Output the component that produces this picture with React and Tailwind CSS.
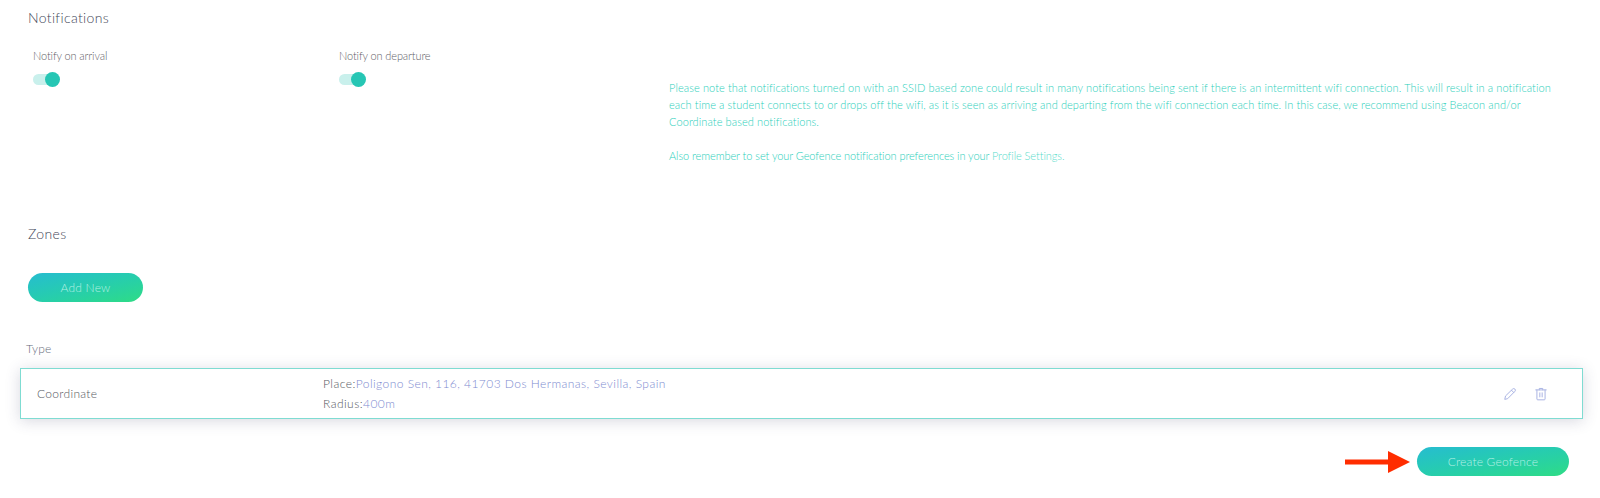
function Toggle() {
  return (
    <div className="relative h-[11px] w-[22px] rounded-full bg-[#c9f0ec]">
      <div className="absolute left-[12px] top-[-2px] h-[15px] w-[15px] rounded-full bg-[#26c6b4]" />
    </div>
  );
}

function GradientButton({ className, children }) {
  return (
    <button className={"flex h-[29px] items-center justify-center rounded-full bg-gradient-to-br from-[#27bcd0] to-[#2fdc84] text-[12px] font-light tracking-[0.2px] text-[#b5efe4] " + className}>
      {children}
    </button>
  );
}

export default function App() {
  return (
    <div className="h-[498px] w-[1600px] overflow-hidden bg-white font-['Lato',sans-serif] font-light text-[#5c6370]">
      <div className="flex h-[214px] flex-col pl-[28px] pt-[8px]">
        <h2 className="text-[14px] leading-[19px] tracking-[0.35px] text-[#3f4658]">Notifications</h2>
        <div className="mt-[21px] flex">
          <div className="ml-[5px] flex w-[306px] flex-col">
            <span className="text-[11px] leading-[15px] tracking-[-0.12px] text-[#5f6168]">Notify on arrival</span>
            <div className="mt-[11px]"><Toggle /></div>
          </div>
          <div className="flex w-[330px] flex-col">
            <span className="text-[11px] leading-[15px] tracking-[-0.12px] text-[#5f6168]">Notify on departure</span>
            <div className="mt-[11px]"><Toggle /></div>
          </div>
          <div className="mt-[31px] w-[890px] text-[11px] leading-[17px] tracking-[0.1px] text-[#2bcfbb]">
            <p>Please note that notifications turned on with an SSID based zone could result in many notifications being sent if there is an intermittent wifi connection. This will result in a notification each time a student connects to or drops off the wifi, as it is seen as arriving and departing from the wifi connection each time. In this case, we recommend using Beacon and/or<br />Coordinate based notifications.</p>
            <p className="mt-[17px] tracking-[-0.07px]">Also remember to set your Geofence notification preferences in your <span className="text-[#5adccb]">Profile Settings.</span></p>
          </div>
        </div>
      </div>
      <div className="pl-[28px] pt-[10px]">
        <h2 className="text-[14px] leading-[19px] tracking-[0.35px] text-[#3f4658]">Zones</h2>
        <GradientButton className="mt-[30px] w-[115px]">Add New</GradientButton>
      </div>
      <div className="pl-[26px] pt-[39px] text-[12px] leading-[16px] tracking-[0.2px] text-[#666a7a]">Type</div>
      <div className="mx-[20px] mt-[11px] flex h-[51px] w-[1563px] items-center border-[1.5px] border-[#7fdcd2] bg-white shadow-[0_2px_14px_rgba(60,60,100,0.2)]">
        <div className="w-[302px] pl-[16px] text-[12px] tracking-[0.3px] text-[#555962]">Coordinate</div>
        <div className="flex-1 text-[12px] leading-[20px] tracking-[0.45px] text-[#555962]">
          <div>Place:<span className="text-[#7e8bd0]">Poligono Sen, 116, 41703 Dos Hermanas, Sevilla, Spain</span></div>
          <div>Radius:<span className="text-[#7e8bd0]">400m</span></div>
        </div>
        <div className="mr-[34px] flex items-center gap-[17px]">
          <svg width="14" height="14" viewBox="0 0 24 24" fill="none" stroke="#a9b3e3" strokeWidth="1.7" strokeLinejoin="round" strokeLinecap="round">
            <path d="M16.5 3.5a2.6 2.6 0 0 1 3.9 3.9L8 20l-5 1.2L4.2 16z" />
            <path d="M14.5 5.5l4 4" />
          </svg>
          <svg width="14" height="14" viewBox="0 0 24 24" fill="none" stroke="#a9b3e3" strokeWidth="1.7" strokeLinejoin="round" strokeLinecap="round">
            <path d="M3 5h18M9 5V2.5h6V5M5 5v15.5a1.5 1.5 0 0 0 1.5 1.5h11a1.5 1.5 0 0 0 1.5-1.5V5" />
            <path d="M10 10v7M14 10v7" />
          </svg>
        </div>
      </div>
      <div className="mr-[31px] mt-[28px] flex items-center justify-end">
        <svg width="66" height="24" viewBox="0 0 66 24" className="mr-[6px]">
          <path d="M0 9.5h43V1l22 11-22 11v-8.5H0z" fill="#ff2d00" />
        </svg>
        <GradientButton className="w-[152px]">Create Geofence</GradientButton>
      </div>
    </div>
  );
}
